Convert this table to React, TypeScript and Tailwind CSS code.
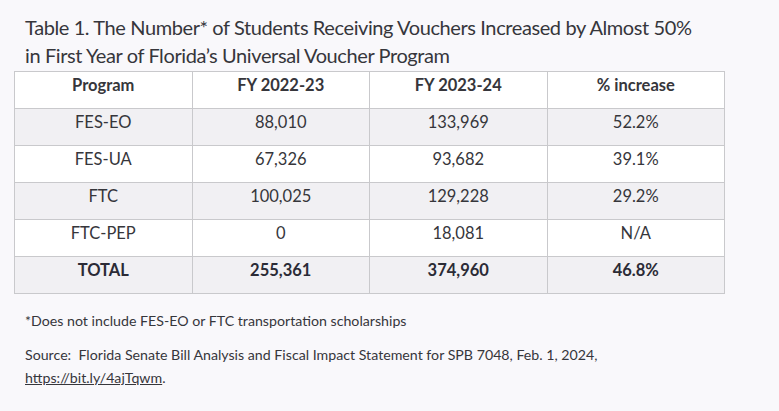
import React from 'react';

type Row = {
  program: string;
  fy23: string;
  fy24: string;
  increase: string;
};

const ROWS: Row[] = [
  { program: 'FES-EO', fy23: '88,010', fy24: '133,969', increase: '52.2%' },
  { program: 'FES-UA', fy23: '67,326', fy24: '93,682', increase: '39.1%' },
  { program: 'FTC', fy23: '100,025', fy24: '129,228', increase: '29.2%' },
  { program: 'FTC-PEP', fy23: '0', fy24: '18,081', increase: 'N/A' }
];

const TOTAL: Row = { program: 'TOTAL', fy23: '255,361', fy24: '374,960', increase: '46.8%' };

const cell = 'h-[37px] border border-[#c9c9cc] px-2 pb-[10px] pt-0 text-center align-middle';

export default function App() {
  return (
    <div className="min-h-screen bg-[#f9f8fb] pt-[13px] text-[#36363b]" style={{ fontFamily: 'Lato, "Liberation Sans", sans-serif' }}>
      <h1 className="pl-[25px] text-[20px] font-normal leading-[28px] tracking-[-0.4px] text-[#36363b]">
        Table 1. The Number* of Students Receiving Vouchers Increased by Almost 50%
        <br />
        in First Year of Florida’s Universal Voucher Program
      </h1>

      <div className="pl-[14px] pt-[2px]">
        <table className="w-[711px] table-fixed border-collapse bg-white text-[16.5px]">
          <thead>
            <tr>
              <th className={`${cell} font-bold`}>Program</th>
              <th className={`${cell} font-bold`}>FY 2022-23</th>
              <th className={`${cell} font-bold`}>FY 2023-24</th>
              <th className={`${cell} font-bold`}>% increase</th>
            </tr>
          </thead>
          <tbody>
            {ROWS.map((row, i) => (
              <tr key={row.program} className={i % 2 === 0 ? 'bg-[#f1f0f3]' : 'bg-white'}>
                <td className={cell}>{row.program}</td>
                <td className={cell}>{row.fy23}</td>
                <td className={cell}>{row.fy24}</td>
                <td className={cell}>{row.increase}</td>
              </tr>
            ))}
            <tr className="bg-[#f1f0f3] font-bold text-[#2b2b36]">
              <td className={cell}>{TOTAL.program}</td>
              <td className={cell}>{TOTAL.fy23}</td>
              <td className={cell}>{TOTAL.fy24}</td>
              <td className={cell}>{TOTAL.increase}</td>
            </tr>
          </tbody>
        </table>
      </div>

      <div className="pl-[25px] pt-[15px] text-[14.2px] leading-[23px]">
        <p>*Does not include FES-EO or FTC transportation scholarships</p>
        <p className="mt-[11px]">
          Source:&nbsp; Florida Senate Bill Analysis and Fiscal Impact Statement for SPB 7048, Feb. 1, 2024,
          <br />
          <a href="#" className="underline">https://bit.ly/4ajTqwm</a>.
        </p>
      </div>
    </div>
  );
}
